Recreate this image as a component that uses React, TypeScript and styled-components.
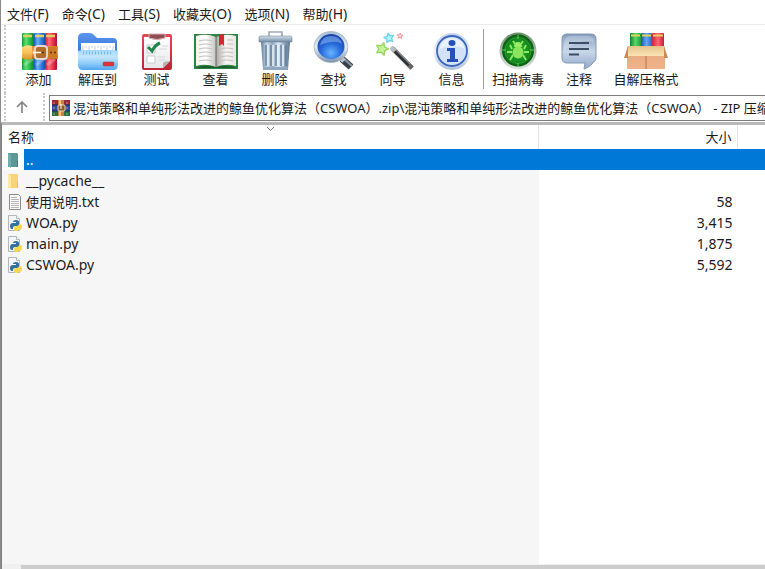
import React from "react";
import styled, { createGlobalStyle, css } from "styled-components";

const GlobalStyle = createGlobalStyle`
  *, *::before, *::after { box-sizing: border-box; }
  body {
    margin: 0;
    background: #ffffff;
    color: #1b1b1b;
    font-family: "Noto Sans", "Noto Sans CJK SC", sans-serif;
    font-size: 14px;
    line-height: 20px;
    text-spacing-trim: space-all;
  }
`;

/* ---------- layout ---------- */

const Window = styled.div`
  display: flex;
  flex-direction: column;
  min-height: 100vh;
  overflow: hidden;
  border-left: 1px solid #8c8c8c;
`;

const MenuBar = styled.nav`
  display: flex;
  gap: 13px;
  height: 25px;
  padding: 4px 6px 0;
  border-bottom: 1px solid #ededed;
`;

const MenuButton = styled.button`
  padding: 0;
  border: 0;
  background: none;
  color: inherit;
  font: inherit;
  line-height: 20px;
  white-space: nowrap;
`;

const Han = styled.span`
  font-size: 13px;
`;

const Grip = styled.span`
  flex: none;
  align-self: stretch;
  width: 0;
  border-left: 2px dotted #c9c9c9;
`;

const Toolbar = styled.div`
  display: flex;
  height: 68px;
  padding-left: 3px;
`;

const Tools = styled.div`
  display: flex;
  padding: 4px 0 0 3px;
`;

const ToolButton = styled.button<{ $width?: number }>`
  display: flex;
  flex-direction: column;
  align-items: center;
  flex: none;
  width: ${({ $width = 59 }) => $width}px;
  padding: 0;
  border: 0;
  background: none;
  color: inherit;
  font: inherit;
  font-size: 13px;
  line-height: 12px;
  white-space: nowrap;

  svg { display: block; width: 48px; height: 44px; }
`;

const Divider = styled.span`
  flex: none;
  width: 1px;
  height: 60px;
  margin: 0 4px 0 2px;
  background: #9b9b9b;
`;

const AddressRow = styled.div`
  display: flex;
  height: 28px;
  padding-left: 3px;
`;

const UpButton = styled.button`
  display: flex;
  align-items: center;
  justify-content: center;
  flex: none;
  width: 37px;
  padding: 0 6px 0 0;
  border: 0;
  background: none;
`;

const AddressBox = styled.label`
  display: flex;
  align-items: center;
  flex: 1;
  min-width: 0;
  height: 26px;
  margin: 2px 0 0 4px;
  padding-left: 2px;
  gap: 3px;
  border: 1px solid #7d7d7d;
  border-right: 0;

  svg { flex: none; }
`;

const AddressInput = styled.input`
  flex: 1;
  min-width: 0;
  height: 22px;
  margin-bottom: 2px;
  padding: 0;
  border: 0;
  outline: 0;
  background: none;
  color: inherit;
  font: inherit;
  font-size: 13px;
  text-spacing-trim: space-all;
`;

const ListPane = styled.main`
  flex: 1;
  margin-top: 1px;
  border-top: 3px solid #b9b9b9;
  border-left: 1px solid #7f7f7f;
  background: linear-gradient(#f6f6f6, #f6f6f6) 0 24px / 70.4% 100% no-repeat;
`;

const FileTable = styled.table`
  width: 100%;
  table-layout: fixed;
  border-spacing: 0;
`;

const NameCol = styled.col`
  width: 70.4%;
`;

const SizeCol = styled.col`
  width: 26%;
`;

const HeadCell = styled.th<{ $end?: boolean }>`
  position: relative;
  height: 24px;
  padding: 0 5px 0 6px;
  border-right: 1px solid #e5e5e5;
  background: #ffffff;
  font-size: 13px;
  font-weight: 400;
  line-height: 22px;
  text-align: ${({ $end }) => ($end ? "right" : "left")};

  &:last-child { border-right: 0; }
`;

const SortMark = styled.svg`
  position: absolute;
  top: 1px;
  left: 50%;
  margin-left: -4px;
`;

const Row = styled.tr<{ $selected?: boolean }>`
  height: 21px;
  ${({ $selected }) =>
    $selected &&
    css`
      background: linear-gradient(#0078d7, #0078d7) 22px 0 no-repeat, #ffffff;
      color: #ffffff;
    `}
`;

const Cell = styled.td<{ $end?: boolean }>`
  height: 21px;
  padding: 0 5px;
  line-height: 20px;
  text-align: ${({ $end }) => ($end ? "right" : "left")};
`;

const FileName = styled.div`
  display: flex;
  align-items: center;
  gap: 3px;
  height: 21px;

  svg { flex: none; }
`;

const ScrollBar = styled.div`
  height: 5px;
  padding: 1px 0 0 19px;
  border-left: 1px solid #7f7f7f;
  background: #f0f0f0;
`;

const Thumb = styled.div`
  height: 4px;
  background: #cdcdcd;
`;

/* ---------- text ---------- */

function Mixed({ text }: { text: string }) {
  return (
    <>
      {text.split(/([\u3000-\uffff]+)/).map((part, i) =>
        i % 2 ? <Han key={i}>{part}</Han> : part
      )}
    </>
  );
}

/* ---------- toolbar icons, each on a 48 x 44 grid ---------- */

function Gradient({ id, stops, across }: { id: string; stops: string[]; across?: boolean }) {
  return (
    <linearGradient id={id} x1="0" y1="0" x2={across ? 1 : 0} y2={across ? 0 : 1}>
      {stops.map((c, i) => (
        <stop key={i} offset={i / (stops.length - 1)} stopColor={c} />
      ))}
    </linearGradient>
  );
}

const AddIcon = () => (
  <svg viewBox="0 0 48 44" aria-hidden="true">
    <defs>
      <Gradient id="bookG" across stops={["#1a9a35", "#5be070", "#26b84a", "#128030"]} />
      <Gradient id="bookB" across stops={["#1c57bb", "#69b2f5", "#2f7fe0", "#1a4da8"]} />
      <Gradient id="bookR" across stops={["#b81836", "#ff6c78", "#e8324c", "#a8122e"]} />
      <Gradient id="belt" stops={["#d98a35", "#f3ae55", "#b8651a"]} />
      <Gradient id="strap" stops={["#ffdc83", "#f8c159", "#d9942a"]} />
    </defs>
    <rect x="7" y="4" width="12" height="37" rx="1" fill="url(#bookG)" />
    <rect x="19" y="4" width="11" height="37" rx="1" fill="url(#bookB)" />
    <rect x="30" y="4" width="12" height="37" rx="1" fill="url(#bookR)" />
    <path d="M8 7h9M20 7h9M31 7h9" stroke="#e0cf62" strokeWidth="2.4" />
    <path d="M9 36l9-6M21 36l8-6M32 36l8-6" stroke="#fff" strokeOpacity=".25" strokeWidth="3" />
    <rect x="16" y="17" width="27" height="13" rx="1" fill="url(#belt)" />
    <path d="M7 18q6-3 10-1v13q-5 2-10-1z" fill="url(#strap)" />
    <path d="M33 18l9-1v12l-9 1z" fill="#cd7825" />
    <rect x="20" y="17" width="12" height="13" rx="3" fill="#b46a2a" stroke="#e6ddd0" strokeWidth="1.8" />
    <path d="M18 23.500h8" stroke="#fff8e9" strokeWidth="1.6" />
    <circle cx="28" cy="23.500" r="1" fill="#5b2e0c" />
    <circle cx="36" cy="23.500" r="1" fill="#5b2e0c" />
    <circle cx="40" cy="23.500" r="1" fill="#5b2e0c" />
  </svg>
);

const ExtractIcon = () => (
  <svg viewBox="0 0 48 44" aria-hidden="true">
    <defs>
      <Gradient id="folderBack" stops={["#5a95ef", "#2b68cf"]} />
      <Gradient id="folderFront" stops={["#a3d8fb", "#c4e6fd", "#8fcdfa", "#4ea5ee"]} />
    </defs>
    <path d="M4 9q0-5 5-5h7q3 0 5 3l2 2h16q4 0 4 4v18H4z" fill="url(#folderBack)" />
    <path d="M7 14h34v12H7z" fill="#fff" />
    <path d="M9 17v4M12 17v2M15 17v4M18 17v2M21 17v4M24 17v2M27 17v4M30 17v2M33 17v4M36 17v2M39 17v4" stroke="#c4d0de" />
    <path d="M4 22l4-1h32l4 1v14q0 5-5 5H9q-5 0-5-5z" fill="url(#folderFront)" />
    <path d="M9 24h30" stroke="#5aa0dc" strokeDasharray="1 2" strokeWidth="3" opacity=".6" />
    <rect x="29" y="33" width="11" height="4" rx="1" fill="#dd3438" stroke="#a93b55" strokeWidth=".5" />
  </svg>
);

const TestIcon = () => (
  <svg viewBox="0 0 48 44" aria-hidden="true">
    <defs>
      <Gradient id="board" stops={["#e04a56", "#bd2434"]} />
      <Gradient id="paper" stops={["#ffffff", "#e5e7e9"]} />
    </defs>
    <rect x="9" y="5" width="30" height="36" rx="2" fill="url(#board)" />
    <path d="M11 8h26v24l-7 7H11z" fill="url(#paper)" />
    <path d="M37 32l-7 7v-5q1-2 7-2z" fill="#b4b7ba" />
    <path d="M16 5h16v4q-8 3-16 0z" fill="#8c4d55" stroke="#d7aeb0" />
    <path d="M14 16h8v8h-8zM14 27h8v7h-8z" fill="#fff" stroke="#c6c9cc" />
    <path d="M15 18l4 4q3-6 8-8" fill="none" stroke="#20854a" strokeWidth="3" />
    <path d="M26 20h8M29 17h6M25 31h7M25 28h7" stroke="#d5d8da" />
  </svg>
);

const ViewIcon = () => (
  <svg viewBox="0 0 48 44" aria-hidden="true">
    <defs>
      <Gradient id="pageL" across stops={["#f5f2ee", "#ffffff", "#c5c1bd"]} />
      <Gradient id="pageR" across stops={["#aaa6a3", "#f8f6f4", "#e9e5e1"]} />
    </defs>
    <path d="M2 5h44v35H2z" fill="#2c8540" />
    <path d="M4 7q11-3 20 1v30q-10-4-20-1z" fill="url(#pageL)" />
    <path d="M44 7q-11-3-20 1v30q10-4 20-1z" fill="url(#pageR)" />
    <path d="M3 39q11-4 20-1h2q10-3 20 1z" fill="#1b5e30" />
    <path d="M7 12q7-2 13 0M7 16q7-2 13 0M7 20q7-2 13 0M7 24q7-2 13 0M7 28q7-2 13 0M7 32q7-2 13 0M35 11h6M35 15h6M28 20q7-2 13 0M28 24q7-2 13 0M28 28q7-2 13 0M28 32q7-2 13 0" fill="none" stroke="#c4c1be" strokeWidth="1.200" />
    <path d="M27 6q3-1 5-1v12l-2-2-3 2z" fill="#d32830" />
    <path d="M24 7v31" stroke="#5e6c61" />
  </svg>
);

const DeleteIcon = () => (
  <svg viewBox="0 0 48 44" aria-hidden="true">
    <defs>
      <Gradient id="can" across stops={["#62809c", "#c9d9e7", "#93aac0", "#e0ecf5", "#93aac0", "#5c7891"]} />
      <Gradient id="lid" stops={["#d3e0eb", "#748ca4"]} />
    </defs>
    <path d="M18 7V3h13v4" fill="none" stroke="#9aa9b8" strokeWidth="1.600" />
    <path d="M10 13h29l-2 28H12z" fill="url(#can)" />
    <path d="M15 16v21M20 16v21M25 16v21M30 16v21M35 16v21" stroke="#5d7b97" strokeWidth="1.300" />
    <path d="M17 16v21M22 16v21M27 16v21M32 16v21" stroke="#e5eff7" strokeWidth="1.600" />
    <path d="M12 38h25v2q-1 1-3 1H15q-3 0-3-2z" fill="#8fa8bf" />
    <path d="M8 8q0-1 2-1h29q2 0 2 1v5H8z" fill="url(#lid)" stroke="#60758a" strokeWidth=".5" />
  </svg>
);

const FindIcon = () => (
  <svg viewBox="0 0 48 44" aria-hidden="true">
    <defs>
      <radialGradient id="lens" cx=".5" cy=".75" r=".75">
        <stop offset="0" stopColor="#65b6ff" />
        <stop offset=".5" stopColor="#276adb" />
        <stop offset="1" stopColor="#163fa6" />
      </radialGradient>
      <Gradient id="rim" stops={["#a9bdd3", "#e6edf5", "#7b91ab"]} />
    </defs>
    <path d="M32 30l9 8" stroke="#37404b" strokeWidth="7" />
    <path d="M33 29l9 8" stroke="#8b95a1" strokeWidth="2" />
    <path d="M30 28l4 4" stroke="#b8c1ca" strokeWidth="5" />
    <ellipse cx="21" cy="18" rx="17" ry="15.500" fill="url(#rim)" stroke="#9aa8ba" strokeWidth=".6" />
    <ellipse cx="21" cy="17.500" rx="13.500" ry="12.500" fill="url(#lens)" />
    <path d="M10 16q2-9 11-9t11 8q-6-5-22 1z" fill="#a5ceff" opacity=".45" />
  </svg>
);

function starPoints(cx: number, cy: number, r: number, turn: number) {
  return Array.from({ length: 10 }, (_, i) => {
    const a = turn + (i * Math.PI) / 5;
    const d = i % 2 ? r * 0.5 : r;
    return `${(cx + d * Math.sin(a)).toFixed(1)},${(cy - d * Math.cos(a)).toFixed(1)}`;
  }).join(" ");
}

const WizardIcon = () => (
  <svg viewBox="0 0 48 44" aria-hidden="true" strokeLinejoin="round">
    <path d="M24 20l19 20" stroke="#b5b5b5" strokeWidth="6" opacity=".3" />
    <path d="M23 19l20 20" stroke="#2e3032" strokeWidth="4" />
    <path d="M25 19l18 18" stroke="#85898c" strokeWidth="1.200" />
    <path d="M22 18l4 4" stroke="#b9bdc0" strokeWidth="4" />
    <path d="M40 36l3 3" stroke="#666" strokeWidth="4" />
    <polygon points={starPoints(13, 20, 6.5, 0.3)} fill="#c9f39a" stroke="#94d860" strokeWidth="1.400" />
    <polygon points={starPoints(20, 9, 5, -0.2)} fill="#b8f3fa" stroke="#6cd0ea" strokeWidth="1.300" />
    <polygon points={starPoints(31, 7, 3, 0.1)} fill="#ffd6d6" stroke="#f29499" />
  </svg>
);

const InfoIcon = () => (
  <svg viewBox="0 0 48 44" aria-hidden="true">
    <defs>
      <Gradient id="infoRim" stops={["#c2d2e9", "#eff4fb", "#aebfd9"]} />
    </defs>
    <circle cx="24" cy="22.500" r="18.500" fill="url(#infoRim)" />
    <circle cx="24" cy="22" r="15" fill="#d3e2f8" stroke="#3865bd" strokeWidth="1.800" />
    <path d="M11 20q3-11 13-11t13 11q-12-6-26 0z" fill="#fff" opacity=".5" />
    <ellipse cx="24" cy="14" rx="3.500" ry="3" fill="#2450b8" />
    <path d="M19 19h8v11h3v3H19v-3h3v-8h-3z" fill="#2450b8" />
  </svg>
);

const ScanIcon = () => (
  <svg viewBox="0 0 48 44" aria-hidden="true">
    <defs>
      <radialGradient id="scan">
        <stop offset="0" stopColor="#23b527" />
        <stop offset=".7" stopColor="#138c1d" />
        <stop offset="1" stopColor="#07570f" />
      </radialGradient>
      <Gradient id="scanRim" stops={["#688e69", "#a9b9aa", "#dfe6df"]} />
    </defs>
    <circle cx="24" cy="22" r="18.500" fill="url(#scanRim)" />
    <circle cx="24" cy="21.500" r="16" fill="url(#scan)" />
    <circle cx="24" cy="21.500" r="13" fill="none" stroke="#62cb54" strokeOpacity=".4" />
    <path d="M24 6v4M24 34v4M8 21h4M36 21h4" stroke="#63d257" />
    <path d="M18 20l-2-4M18 23h-5M19 26l-3 5M30 20l2-4M30 23h5M29 26l3 5M21 15l-2-3M27 15l2-3" stroke="#8fe865" strokeWidth="1.800" fill="none" />
    <path d="M20 18q0-5 4-5t4 5z" fill="#9bea68" />
    <ellipse cx="24" cy="23.500" rx="5.500" ry="6" fill="#8ae45d" />
  </svg>
);

const CommentIcon = () => (
  <svg viewBox="0 0 48 44" aria-hidden="true">
    <defs>
      <Gradient id="bubble" stops={["#839bbc", "#c8d7e9", "#91a9c9"]} />
    </defs>
    <path d="M12 5h24q5 0 5 5v18q0 5-3 5-1 4-9 7l1-6H12q-5 0-5-5V10q0-5 5-5z" fill="url(#bubble)" stroke="#8398b4" />
    <path d="M9 14q1-7 6-7h18q6 0 6 6-12-4-30 8z" fill="#fff" opacity=".25" />
    <path d="M14 14h20M14 20h20M14 25.500h10" stroke="#3d4d65" strokeWidth="1.800" />
  </svg>
);

const SfxIcon = () => (
  <svg viewBox="0 0 48 44" aria-hidden="true">
    <defs>
      <Gradient id="box" stops={["#e6a57a", "#efb48c"]} />
      <Gradient id="flap" stops={["#e5c38a", "#fae4b6"]} />
      <Gradient id="sfxG" across stops={["#15832a", "#55d76a", "#1d9c39"]} />
      <Gradient id="sfxB" across stops={["#2256a8", "#63a8f0", "#2866c2"]} />
      <Gradient id="sfxR" across stops={["#c82539", "#ff6673", "#c51d35"]} />
    </defs>
    <rect x="8" y="4" width="11" height="15" rx="1" fill="url(#sfxG)" />
    <rect x="19" y="4" width="11" height="15" rx="1" fill="url(#sfxB)" />
    <rect x="30" y="4" width="12" height="15" rx="1" fill="url(#sfxR)" />
    <path d="M9 6.500h9M20 6.500h9M31 6.500h10" stroke="#e3d25e" strokeWidth="2" />
    <path d="M5 18h38v22H5z" fill="url(#box)" />
    <path d="M24 27v13" stroke="#b8744a" />
    <path d="M6 17h36l2 10H4z" fill="url(#flap)" />
    <path d="M6 17L2 29h4zM42 17l4 12h-4z" fill="#c98a57" />
  </svg>
);

const TOOLS = [
  { label: "添加", icon: <AddIcon /> },
  { label: "解压到", icon: <ExtractIcon /> },
  { label: "测试", icon: <TestIcon /> },
  { label: "查看", icon: <ViewIcon /> },
  { label: "删除", icon: <DeleteIcon /> },
  { label: "查找", icon: <FindIcon /> },
  { label: "向导", icon: <WizardIcon /> },
  { label: "信息", icon: <InfoIcon /> },
];

const EXTRA_TOOLS = [
  { label: "扫描病毒", icon: <ScanIcon />, width: 60 },
  { label: "注释", icon: <CommentIcon />, width: 62 },
  { label: "自解压格式", icon: <SfxIcon />, width: 72 },
];

/* ---------- small icons ---------- */

const ArchiveIcon = () => (
  <svg width="18" height="18" viewBox="0 0 18 18" aria-hidden="true">
    <path d="M0 1h18v5H0z" fill="#9b2638" />
    <path d="M0 6h18v6H0z" fill="#334ba7" />
    <path d="M0 12h18v5H0z" fill="#237544" />
    <path d="M0 6h18M0 12h18" stroke="#222a48" />
    <path d="M2 3v2M2 8v2M2 14v2M15 3v2M15 8v2M15 14v2" stroke="#b59f6a" />
    <path d="M6 1h6v16H6z" fill="#c98432" />
    <path d="M7 1h2v16H7z" fill="#edc37a" />
    <rect x="6" y="6" width="7" height="6" rx="1" fill="#8a5c2d" stroke="#e4d4b4" />
    <path d="M9 5v5" stroke="#fff" />
  </svg>
);

const FolderIcon = ({ tone }: { tone: "teal" | "yellow" }) => {
  const teal = tone === "teal";
  return (
    <svg width="16" height="18" viewBox="0 0 16 18" aria-hidden="true">
      <path d="M1 2h9l1 1v13H1z" fill={teal ? "#5b9998" : "#f6d477"} />
      <path d="M1 2l3 2v13l-3-2z" fill={teal ? "#72adac" : "#ffe6a3"} />
      <path d="M10 9l1 1v6h-1z" fill={teal ? "#3c777e" : "#e9bf5a"} />
    </svg>
  );
};

const TextIcon = () => (
  <svg width="16" height="18" viewBox="0 0 16 18" aria-hidden="true">
    <path d="M2.500 1.500h9l2 2v13h-11z" fill="#fafafa" stroke="#8b8b8b" />
    <path d="M4 4.500h6M4 6.500h8M4 8.500h8M4 10.500h8M4 12.500h8M4 14.500h8" stroke="#b4b6b8" />
  </svg>
);

const PythonIcon = () => (
  <svg width="16" height="18" viewBox="0 0 16 18" aria-hidden="true">
    <path d="M1.500 1.500h8l3 3v12h-11z" fill="#f3f5f7" stroke="#b1b6bb" />
    <path d="M9.500 1.500v3h3" fill="#fff" stroke="#b1b6bb" />
    <path d="M6 8q0-2 3-2 3 0 3 2v3q0 1-2 1H8q-2 0-2 2v1H5q-2 0-2-3t3-3h3V8z" fill="#32719f" />
    <path d="M12 10h1q2 0 2 3 0 3-3 3h-1v1h-2q-2 0-2-2v-1q0-2 2-2h1q2 0 2-2z" fill="#f8d84b" />
  </svg>
);

/* ---------- data ---------- */

const MENUS = ["文件(F)", "命令(C)", "工具(S)", "收藏夹(O)", "选项(N)", "帮助(H)"];

const ADDRESS =
  "混沌策略和单纯形法改进的鲸鱼优化算法（CSWOA）.zip\\混沌策略和单纯形法改进的鲸鱼优化算法（CSWOA） - ZIP 压缩文件";

const FILES = [
  { name: "..", size: "", icon: <FolderIcon tone="teal" />, selected: true },
  { name: "__pycache__", size: "", icon: <FolderIcon tone="yellow" /> },
  { name: "使用说明.txt", size: "58", icon: <TextIcon /> },
  { name: "WOA.py", size: "3,415", icon: <PythonIcon /> },
  { name: "main.py", size: "1,875", icon: <PythonIcon /> },
  { name: "CSWOA.py", size: "5,592", icon: <PythonIcon /> },
];

export default function App() {
  return (
    <Window>
      <GlobalStyle />
      <MenuBar>
        {MENUS.map((m) => (
          <MenuButton key={m} type="button">
            <Mixed text={m} />
          </MenuButton>
        ))}
      </MenuBar>

      <Toolbar role="toolbar">
        <Grip />
        <Tools>
          {TOOLS.map((t) => (
            <ToolButton key={t.label} type="button">
              {t.icon}
              {t.label}
            </ToolButton>
          ))}
          <Divider />
          {EXTRA_TOOLS.map((t) => (
            <ToolButton key={t.label} type="button" $width={t.width}>
              {t.icon}
              {t.label}
            </ToolButton>
          ))}
        </Tools>
      </Toolbar>

      <AddressRow>
        <Grip />
        <UpButton type="button" aria-label="向上">
          <svg width="14" height="14" viewBox="0 0 14 14" fill="none" stroke="#868686" strokeWidth="1.700">
            <path d="M7 13V2M2 7l5-5 5 5" />
          </svg>
        </UpButton>
        <Grip />
        <AddressBox>
          <ArchiveIcon />
          <AddressInput type="text" aria-label="地址" defaultValue={ADDRESS} />
        </AddressBox>
      </AddressRow>

      <ListPane>
        <FileTable>
          <colgroup>
            <NameCol />
            <SizeCol />
            <col />
          </colgroup>
          <thead>
            <tr>
              <HeadCell scope="col" aria-sort="ascending">
                名称
                <SortMark width="9" height="6" viewBox="0 0 9 6" fill="none" stroke="#7a7a7a">
                  <path d="M1 1l3.500 3.500L8 1" />
                </SortMark>
              </HeadCell>
              <HeadCell scope="col" $end>
                大小
              </HeadCell>
              <HeadCell as="td" />
            </tr>
          </thead>
          <tbody>
            {FILES.map((f) => (
              <Row key={f.name} $selected={f.selected} aria-selected={!!f.selected}>
                <Cell>
                  <FileName>
                    {f.icon}
                    <span>
                      <Mixed text={f.name} />
                    </span>
                  </FileName>
                </Cell>
                <Cell $end>{f.size}</Cell>
                <Cell />
              </Row>
            ))}
          </tbody>
        </FileTable>
      </ListPane>
      <ScrollBar>
        <Thumb />
      </ScrollBar>
    </Window>
  );
}
